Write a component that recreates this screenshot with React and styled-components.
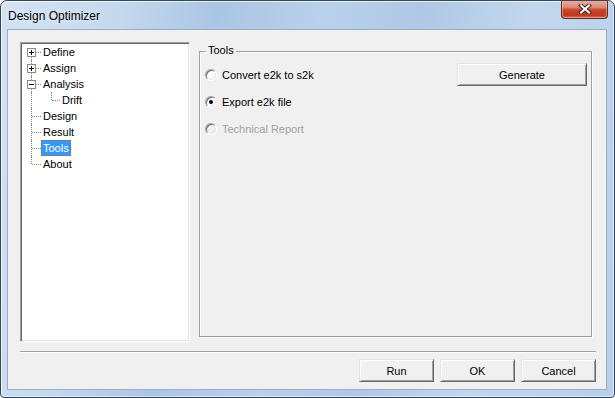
import React from "react";
import styled, { createGlobalStyle, css } from "styled-components";

const treeItems = [
  { label: "Define", box: "plus" },
  { label: "Assign", box: "plus" },
  { label: "Analysis", box: "minus" },
  { label: "Drift", child: true },
  { label: "Design" },
  { label: "Result" },
  { label: "Tools", selected: true },
  { label: "About", last: true },
];

const options = [
  { label: "Convert e2k to s2k" },
  { label: "Export e2k file", checked: true },
  { label: "Technical Report", disabled: true },
];

export default function App() {
  return (
    <>
      <GlobalStyle />
      <Window>
        <TitleBar>
          <Title>Design Optimizer</Title>
          <CloseBtn>
            <svg width="14" height="10" viewBox="0 0 14 10">
              <path d="M3 1.5 L11 8.5 M11 1.5 L3 8.5" stroke="#3d2320" strokeWidth="4" strokeLinecap="square" fill="none" />
              <path d="M3 1.5 L11 8.5 M11 1.5 L3 8.5" stroke="#fff" strokeWidth="2" strokeLinecap="square" fill="none" />
            </svg>
          </CloseBtn>
        </TitleBar>
        <Client>
          <MainRow>
            <TreeBox>
              {treeItems.map((item, i) => (
                <TreeRow key={item.label}>
                  {item.child ? (
                    <>
                      <Guide $x={9} $top $bottom />
                      <Guide $x={10} $top $h />
                    </>
                  ) : (
                    <Guide $x={9} $top={i > 0} $bottom={!item.last} $h>
                      {item.box && <ExpandBox $minus={item.box === "minus"} />}
                    </Guide>
                  )}
                  <TreeLabel $selected={item.selected}>{item.label}</TreeLabel>
                </TreeRow>
              ))}
            </TreeBox>
            <GroupBox>
              <Legend>Tools</Legend>
              <GroupBody>
                <RadioList>
                  {options.map((o) => (
                    <RadioRow key={o.label} $disabled={o.disabled}>
                      <RadioCircle $checked={o.checked} $disabled={o.disabled} />
                      {o.label}
                    </RadioRow>
                  ))}
                </RadioList>
                <Button $w={130}>Generate</Button>
              </GroupBody>
            </GroupBox>
          </MainRow>
          <Separator />
          <ButtonRow>
            <Button $w={75}>Run</Button>
            <Button $w={75}>OK</Button>
            <Button $w={75}>Cancel</Button>
          </ButtonRow>
        </Client>
      </Window>
    </>
  );
}

const GlobalStyle = createGlobalStyle`
  html, body {
    margin: 0;
    padding: 0;
    background: #fff;
  }
  body {
    font-family: "Liberation Sans", Arial, sans-serif;
    font-size: 11px;
  }
`;

const Window = styled.div`
  width: 615px;
  height: 398px;
  box-sizing: border-box;
  display: flex;
  flex-direction: column;
  overflow: hidden;
  border: 1px solid #37475a;
  border-radius: 7px 7px 4px 4px;
  background: linear-gradient(
    100deg,
    #d3e3f4 0%,
    #c4d8ee 18%,
    #aac5e3 32%,
    #b9d1eb 48%,
    #aec8e5 62%,
    #c2d7ee 78%,
    #b8cfe9 100%
  );
  box-shadow: inset 1px 1px 0 rgba(255, 255, 255, 0.7),
    inset -1px -1px 0 rgba(255, 255, 255, 0.5);
`;

const TitleBar = styled.div`
  height: 28px;
  flex: none;
  display: flex;
  justify-content: space-between;
  align-items: flex-start;
`;

const Title = styled.div`
  padding: 8px 0 0 7px;
  font-size: 12px;
  line-height: 14px;
  color: #000;
  text-shadow: 0 0 6px rgba(255, 255, 255, 0.9);
`;

const CloseBtn = styled.div`
  width: 47px;
  height: 19px;
  margin: -1px 6px 0 0;
  box-sizing: border-box;
  display: flex;
  align-items: center;
  justify-content: center;
  border: 1px solid #5e2a22;
  border-top: none;
  border-radius: 0 0 4px 4px;
  background: linear-gradient(
    to bottom,
    #eab0a3 0%,
    #dc8a78 40%,
    #c8452b 55%,
    #c0381f 85%,
    #d87458 100%
  );
  box-shadow: inset 0 0 0 1px rgba(255, 210, 200, 0.45);
`;

const Client = styled.div`
  flex: 1;
  margin: 0 7px 7px 6px;
  border: 1px solid #99aec6;
  background: #f0f0f0;
  display: flex;
  flex-direction: column;
  padding: 12px 10px 0 12px;
`;

const MainRow = styled.div`
  display: flex;
  gap: 9px;
  height: 300px;
`;

const TreeBox = styled.div`
  width: 170px;
  height: 300px;
  box-sizing: border-box;
  background: #fff;
  border: 1px solid;
  border-color: #a0a0a0 #fff #fff #a0a0a0;
  box-shadow: inset 1px 1px 0 #696969, inset -1px -1px 0 #e3e3e3;
  padding: 1px 0 0 1px;
`;

const TreeRow = styled.div`
  display: flex;
  height: 16px;
`;

const dotted = "1px dotted #8a8a8a";

const Guide = styled.div`
  position: relative;
  width: 19px;
  height: 16px;
  flex: none;

  &::before {
    content: "";
    position: absolute;
    left: ${(p) => p.$x}px;
    top: ${(p) => (p.$top ? 0 : 8)}px;
    bottom: ${(p) => (p.$bottom ? 0 : 8)}px;
    border-left: ${dotted};
    display: ${(p) => (p.$top || p.$bottom ? "block" : "none")};
  }

  &::after {
    content: "";
    position: absolute;
    left: ${(p) => p.$x + 1}px;
    right: 0;
    top: 8px;
    border-top: ${dotted};
    display: ${(p) => (p.$h ? "block" : "none")};
  }
`;

const ExpandBox = styled.span`
  position: absolute;
  z-index: 1;
  left: 5px;
  top: 4px;
  width: 9px;
  height: 9px;
  box-sizing: border-box;
  border: 1px solid #8a8a8a;
  background: #fff;

  &::before {
    content: "";
    position: absolute;
    left: 1px;
    top: 3px;
    width: 5px;
    height: 1px;
    background: #000;
  }

  ${(p) =>
    !p.$minus &&
    css`
      &::after {
        content: "";
        position: absolute;
        left: 3px;
        top: 1px;
        width: 1px;
        height: 5px;
        background: #000;
      }
    `}
`;

const TreeLabel = styled.span`
  height: 16px;
  line-height: 16px;
  padding: 0 2px;
  box-sizing: border-box;
  color: #000;
  white-space: nowrap;

  ${(p) =>
    p.$selected &&
    css`
      background: #3399ff;
      color: #fff;
      outline: 1px dotted #b8601c;
      outline-offset: -1px;
    `}
`;

const GroupBox = styled.div`
  position: relative;
  width: 393px;
  height: 286px;
  margin-top: 9px;
  box-sizing: border-box;
  border: 1px solid #a0a0a0;
  box-shadow: inset 1px 1px 0 #fff, 1px 1px 0 #fff;
`;

const Legend = styled.span`
  position: absolute;
  left: 6px;
  top: -8px;
  padding: 0 2px;
  line-height: 13px;
  background: #f0f0f0;
  color: #000;
`;

const GroupBody = styled.div`
  display: flex;
  justify-content: space-between;
  align-items: flex-start;
  padding: 11px 4px 0 5px;
`;

const RadioList = styled.div`
  display: flex;
  flex-direction: column;
  gap: 14px;
  margin-top: 5px;
`;

const RadioRow = styled.label`
  display: flex;
  align-items: center;
  gap: 5px;
  height: 13px;
  color: ${(p) => (p.$disabled ? "#a0a0a0" : "#000")};
`;

const RadioCircle = styled.span`
  width: 12px;
  height: 12px;
  box-sizing: border-box;
  border-radius: 50%;
  border: 1px solid;
  border-color: #a0a0a0 #fff #fff #a0a0a0;
  box-shadow: inset 1px 1px 0 #6f6f6f, inset -1px -1px 0 #e3e3e3;
  background: ${(p) => (p.$disabled ? "#f0f0f0" : "#fff")};
  display: flex;
  align-items: center;
  justify-content: center;

  &::after {
    content: "";
    width: 4px;
    height: 4px;
    border-radius: 50%;
    background: #000;
    display: ${(p) => (p.$checked ? "block" : "none")};
  }
`;

const Button = styled.button`
  width: ${(p) => p.$w}px;
  height: 23px;
  box-sizing: border-box;
  padding: 0;
  font-family: "Liberation Sans", Arial, sans-serif;
  font-size: 11px;
  color: #000;
  background: #f0f0f0;
  border: 1px solid;
  border-color: #e3e3e3 #696969 #696969 #e3e3e3;
  box-shadow: inset 1px 1px 0 #fff, inset -1px -1px 0 #a0a0a0;
  border-radius: 0;
`;

const Separator = styled.div`
  margin-top: 9px;
  border-top: 1px solid #a0a0a0;
  border-bottom: 1px solid #fff;
`;

const ButtonRow = styled.div`
  display: flex;
  justify-content: flex-end;
  gap: 6px;
  margin-top: 6px;
`;
